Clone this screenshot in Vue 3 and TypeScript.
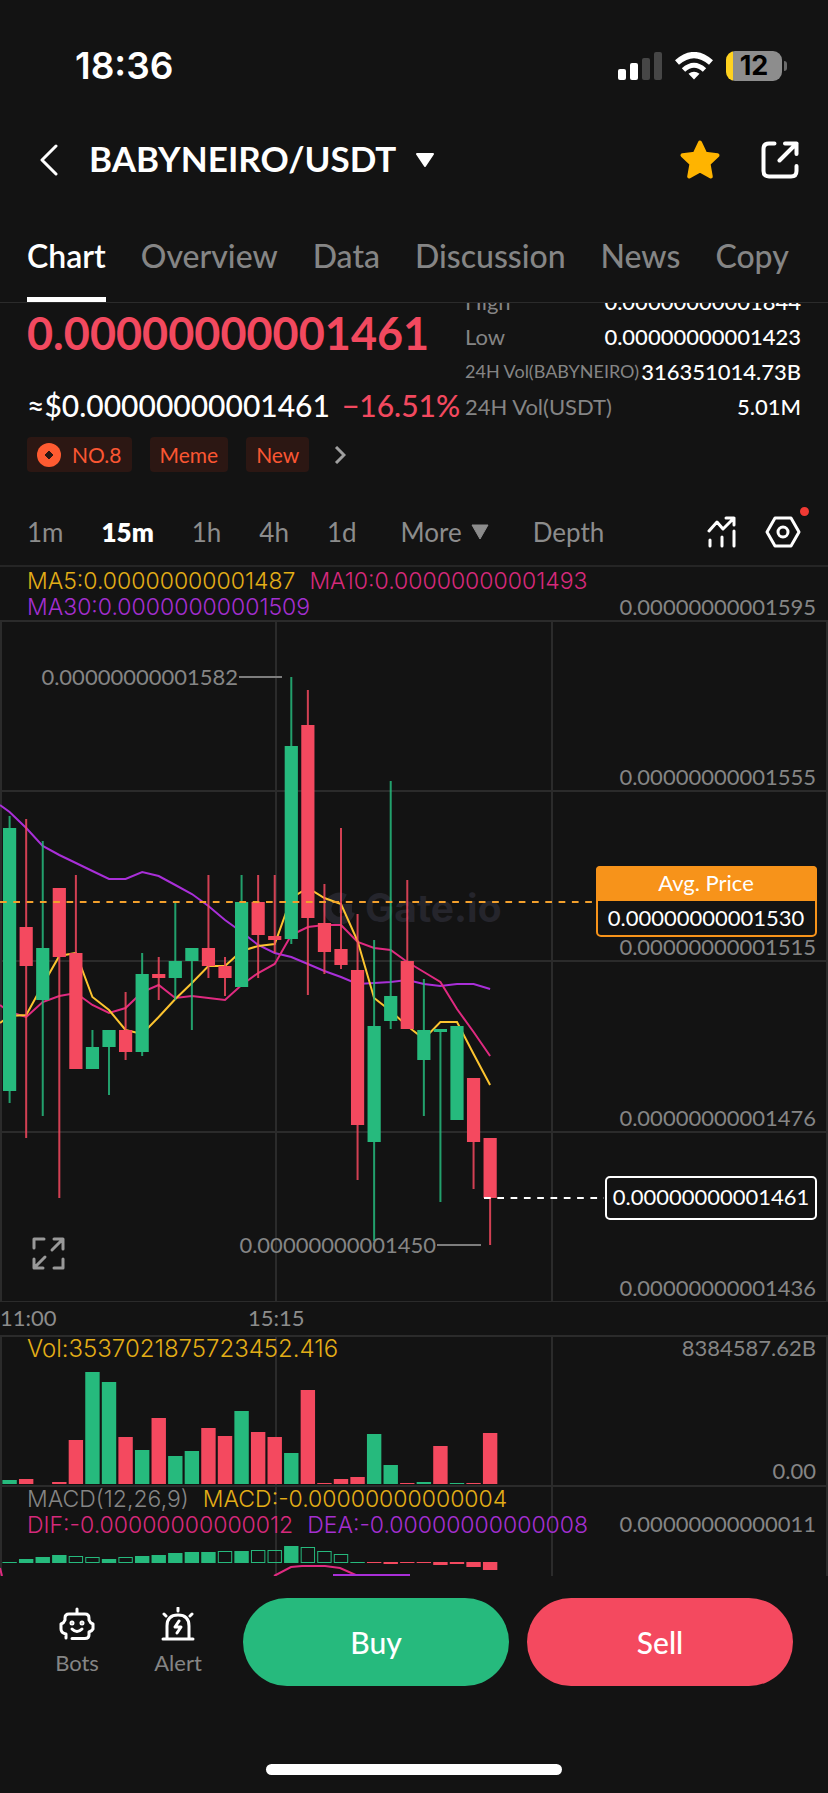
<script setup lang="ts">
type Side = 'up' | 'down'
interface Candle { side: Side; top: number; bottom: number; high: number; low: number }
interface MacdBar { height: number; hollow?: boolean }

const tabs = ['Chart', 'Overview', 'Data', 'Discussion', 'News', 'Copy']
const intervals = ['1m', '15m', '1h', '4h', '1d']
const stats = [
  { label: 'High', value: '0.00000000001844' },
  { label: 'Low', value: '0.00000000001423' },
  { label: '24H Vol(BABYNEIRO)', value: '316351014.73B', compact: true },
  { label: '24H Vol(USDT)', value: '5.01M' },
]

const FIRST_X = 9.6
const STEP = 16.57
const cx = (i: number) => FIRST_X + STEP * i

const c = (side: Side, top: number, bottom: number, high: number, low: number): Candle => ({ side, top, bottom, high, low })
const candles: Candle[] = [
  c('up', 207, 470, 195, 482), c('down', 306, 345, 198, 517), c('up', 327, 379, 220, 495),
  c('down', 267, 336, 267, 577), c('down', 332, 448, 254, 448), c('up', 426, 448, 409, 448),
  c('up', 409, 426, 409, 474), c('down', 409, 431, 371, 439), c('up', 353, 431, 332, 435),
  c('down', 353, 357, 336, 379), c('up', 340, 357, 282, 379), c('up', 327, 340, 327, 409),
  c('down', 327, 345, 254, 357), c('down', 345, 357, 336, 375), c('up', 281, 366, 254, 366),
  c('down', 281, 314, 254, 357), c('down', 315, 319, 254, 332), c('up', 125, 318, 56, 323),
  c('down', 104, 297, 69, 374), c('down', 302, 331, 263, 353), c('down', 328, 344, 207, 348),
  c('down', 349, 504, 293, 559), c('up', 405, 521, 319, 620), c('up', 375, 400, 160, 408),
  c('down', 340, 408, 259, 408), c('up', 409, 439, 358, 495), c('up', 408, 411, 408, 581),
  c('up', 405, 499, 405, 499), c('down', 457, 521, 457, 568), c('down', 517, 577, 517, 624),
]

const line = (start: number, ys: number[]) => `0,${start} ` + ys.map((y, i) => `${cx(i).toFixed(1)},${y}`).join(' ')
const ma5 = line(402, [395, 394, 364, 335, 332, 376, 389, 409, 413, 396, 378, 362, 345, 345, 330, 325, 323, 277, 267, 277, 283, 320, 377, 390, 405, 418, 401, 401, 433, 464])
const ma10 = line(384, [391, 396, 381, 375, 372, 384, 392, 387, 371, 364, 377, 375, 377, 379, 364, 352, 343, 314, 306, 304, 304, 321, 327, 329, 341, 351, 361, 388, 411, 435])
const ma30 = line(184, [191, 207, 225, 234, 242, 250, 258, 258, 251, 255, 264, 273, 285, 299, 311, 324, 332, 336, 343, 350, 356, 363, 362, 361, 359, 363, 365, 363, 363, 368])

const volumes = [4, 5, 0, 2, 44, 112, 102, 47, 34, 66, 28, 33, 56, 48, 73, 52, 47, 31, 94, 1, 5, 7, 50, 19, 1, 2, 38, 1, 1, 51]
const volumeSide = (i: number): Side => (i === 26 ? 'down' : candles[i].side)

const m = (height: number, hollow = false): MacdBar => ({ height, hollow })
const macd: MacdBar[] = [
  m(1), m(4), m(6), m(8), m(6, true), m(5, true), m(4), m(5, true), m(7), m(8), m(10), m(11), m(11), m(11, true), m(12),
  m(12, true), m(12, true), m(17), m(15, true), m(11, true), m(8, true), m(1), m(-1), m(-2), m(-1), m(-1), m(-3), m(-2), m(-5), m(-8),
]

const priceScale = [
  { y: 0, label: '0.00000000001595' }, { y: 170, label: '0.00000000001555' }, { y: 340, label: '0.00000000001515' },
  { y: 511, label: '0.00000000001476' }, { y: 681, label: '0.00000000001436' },
]
</script>

<template>
  <div class="app">
    <div class="status">
      <span class="clock">18:36</span>
      <div class="status-icons">
        <svg width="44" height="28" viewBox="0 0 44 28">
          <rect x="0" y="17" width="8" height="11" rx="2" fill="#fff" />
          <rect x="12" y="11" width="8" height="17" rx="2" fill="#fff" />
          <rect x="24" y="6" width="8" height="22" rx="2" fill="#464646" />
          <rect x="36" y="0" width="8" height="28" rx="2" fill="#464646" />
        </svg>
        <svg width="38" height="28" viewBox="0 0 38 28" fill="none" stroke="#fff" stroke-width="6">
          <path d="M2 10.500Q19 -4.500 36 10.500" />
          <path d="M8.500 18Q19 8.500 29.500 18" stroke-width="5" />
          <path d="M19 27.500L13.500 21.800Q19 17.500 24.500 21.800Z" fill="#fff" stroke="none" />
        </svg>
        <div class="battery"><span class="cell">12</span><span class="cap"></span></div>
      </div>
    </div>

    <header class="header">
      <button class="icon-btn" aria-label="Back">
        <svg width="18" height="32" viewBox="0 0 18 32" fill="none" stroke="#fff" stroke-width="3" stroke-linecap="round" stroke-linejoin="round"><path d="M16 2L2 16L16 30" /></svg>
      </button>
      <button class="pair">
        <h1>BABYNEIRO/USDT</h1>
        <svg width="18" height="14" viewBox="0 0 18 14"><path d="M1 1H17L9 13Z" fill="#fff" stroke="#fff" stroke-linejoin="round" stroke-width="2" /></svg>
      </button>
      <button class="icon-btn" aria-label="Favorite">
        <svg width="42" height="42" viewBox="0 0 42 42"><path d="M21 3.500L26.200 14.700L38.500 16.200L29.500 24.700L31.800 37.500L21 31.500L10.200 37.500L12.500 24.700L3.500 16.200L15.800 14.700Z" fill="#ffb400" stroke="#ffb400" stroke-width="4" stroke-linejoin="round" /></svg>
      </button>
      <button class="icon-btn" aria-label="Share">
        <svg width="38" height="38" viewBox="0 0 38 38" fill="none" stroke="#fff" stroke-width="4" stroke-linecap="round" stroke-linejoin="round">
          <path d="M13.500 2.500H8Q2.500 2.500 2.500 8V30Q2.500 35.500 8 35.500H30Q35.500 35.500 35.500 30V25" />
          <path d="M24 2.500H35.500V13M35.500 2.500L18.500 19.500" />
        </svg>
      </button>
    </header>

    <nav class="tabs">
      <a v-for="(t, i) in tabs" :key="t" href="#" :class="{ active: i === 0 }">{{ t }}</a>
    </nav>

    <section class="ticker">
      <div class="quote">
        <div class="price">0.00000000001461</div>
        <div class="fiat"><span>≈$0.00000000001461</span><span class="change">−16.51%</span></div>
        <div class="tags">
          <a href="#" class="tag">
            <svg width="24" height="24" viewBox="0 0 24 24"><circle cx="12" cy="12" r="12" fill="#ff5b31" /><path d="M12 8L16 12L12 16L8 12Z" fill="#2c1713" stroke="#2c1713" stroke-linejoin="round" /></svg>
            NO.8
          </a>
          <a href="#" class="tag">Meme</a>
          <a href="#" class="tag">New</a>
          <button class="icon-btn more-tags" aria-label="More tags">
            <svg width="12" height="18" viewBox="0 0 12 18" fill="none" stroke="#a0a0a0" stroke-width="3"><path d="M2 1L10 9L2 17" /></svg>
          </button>
        </div>
      </div>
      <dl class="stats">
        <div v-for="s in stats" :key="s.label" class="stat">
          <dt :class="{ compact: s.compact }">{{ s.label }}</dt>
          <dd>{{ s.value }}</dd>
        </div>
      </dl>
    </section>

    <div class="intervals">
      <button v-for="t in intervals" :key="t" :class="{ active: t === '15m' }">{{ t }}</button>
      <button class="more">More <svg width="18" height="16" viewBox="0 0 18 16"><path d="M1 1H17L9 15Z" fill="#8c8c8c" stroke="#8c8c8c" stroke-linejoin="round" /></svg></button>
      <button>Depth</button>
      <div class="tools">
        <button class="icon-btn" aria-label="Indicators">
          <svg width="30" height="32" viewBox="0 0 30 32" fill="none" stroke="#fff" stroke-width="3" stroke-linecap="round" stroke-linejoin="round">
            <path d="M2 15L10 6L16 13L27 2M19 2H27V9M3 24V30M15 21V30M27 15V30" />
          </svg>
        </button>
        <button class="icon-btn settings" aria-label="Chart settings">
          <svg width="36" height="34" viewBox="0 0 36 34" fill="none" stroke="#fff" stroke-width="3" stroke-linejoin="round">
            <path d="M10 3H26L34 17L26 31H10L2 17Z" /><circle cx="18" cy="17" r="5" />
          </svg>
          <span class="dot"></span>
        </button>
      </div>
    </div>

    <main class="chart">
      <div class="pane price-pane">
        <div class="legend">
          <div><span class="gold">MA5:0.00000000001487</span><span class="rose">MA10:0.00000000001493</span></div>
          <div><span class="violet">MA30:0.00000000001509</span></div>
        </div>
        <svg class="plot" viewBox="0 0 828 735">
          <g transform="translate(0 54)">
            <g class="grid">
              <path v-for="p in priceScale" :key="p.y" :d="`M0 ${p.y}H828`" />
              <path d="M1 0V681M276 0V681M552 0V681M827 0V681" />
            </g>
            <g class="mark">
              <path d="M345 277A12 12 0 1 0 351 291" fill="none" stroke="#25252c" stroke-width="8" />
              <rect x="339" y="283" width="13" height="9" fill="#25252c" />
              <text x="365" y="301">Gate.io</text>
            </g>
            <polyline :points="ma30" class="ma violet-line" />
            <polyline :points="ma10" class="ma rose-line" />
            <polyline :points="ma5" class="ma gold-line" />
            <g v-for="(k, i) in candles" :key="i" :class="k.side">
              <rect :x="cx(i) - 1" :y="k.high" width="2" :height="k.low - k.high" opacity=".85" />
              <rect :x="cx(i) - 6.6" :y="k.top" width="13.2" :height="k.bottom - k.top" />
            </g>
            <path d="M0 281H596" stroke="#f3a02c" stroke-width="2" stroke-dasharray="6.700 6.600" />
            <path d="M484 577H604" stroke="#fff" stroke-width="2" stroke-dasharray="6.700 6.600" />
            <g class="axis">
              <text v-for="p in priceScale" :key="p.y" x="816" :y="p.y - 6" text-anchor="end">{{ p.label }}</text>
              <text x="238" y="64" text-anchor="end">0.00000000001582</text>
              <text x="436" y="632" text-anchor="end">0.00000000001450</text>
              <path d="M239 56H282M437 624H481" stroke="#7d7d7d" stroke-width="2" />
            </g>
            <rect x="597" y="246" width="219" height="69" rx="4" fill="#131313" stroke="#f7931a" stroke-width="2" />
            <path d="M596 280V249Q596 245 600 245H813Q817 245 817 249V280Z" fill="#f7931a" />
            <text class="flag" x="706" y="270">Avg. Price</text>
            <text class="flag" x="706" y="305">0.00000000001530</text>
            <rect x="606" y="556" width="210" height="42" rx="4" fill="#131313" stroke="#fff" stroke-width="2" />
            <text class="flag" x="711" y="584">0.00000000001461</text>
            <g fill="none" stroke="#999" stroke-width="3" stroke-linecap="round" stroke-linejoin="round">
              <path d="M34 627V618H44M54 618H63V628M62 619L52 629M63 638V647H54M43 647H34V638M35 646L45 636" />
            </g>
          </g>
        </svg>
      </div>

      <div class="times"><span>11:00</span><span>15:15</span></div>

      <div class="pane">
        <div class="legend volume-legend"><span class="gold">Vol:3537021875723452.416</span></div>
        <svg class="plot" viewBox="0 0 828 150">
          <path class="grid" d="M0 1H828M1 0V150M276 0V150M552 0V150M827 0V150" />
          <rect v-for="(v, i) in volumes" :key="i" :class="volumeSide(i)" :x="cx(i) - 7.2" :y="149 - v" width="14.4" :height="v" />
          <g class="axis"><text x="816" y="21" text-anchor="end">8384587.62B</text><text x="816" y="144" text-anchor="end">0.00</text></g>
        </svg>
      </div>

      <div class="pane">
        <div class="legend">
          <div><span class="grey">MACD(12,26,9)</span><span class="gold">MACD:-0.00000000000004</span></div>
          <div><span class="rose">DIF:-0.00000000000012</span><span class="violet">DEA:-0.00000000000008</span></div>
        </div>
        <svg class="plot" viewBox="0 0 828 91">
          <path class="grid" d="M0 1H828M1 0V91M276 0V91M552 0V91M827 0V91" />
          <template v-for="(b, i) in macd" :key="i">
            <rect v-if="b.hollow" :x="cx(i) - 6.7" :y="77.500 - b.height" width="13.4" :height="b.height" fill="none" stroke="#26ba7d" />
            <rect v-else :class="b.height > 0 ? 'up' : 'down'" :x="cx(i) - 7.2" :y="b.height > 0 ? 78 - b.height : 77" width="14.4" :height="Math.abs(b.height)" />
          </template>
          <path d="M0 83L2 91M274 91L291 82L302 81L325 81L340 83L358 91" class="ma rose-line" />
          <path d="M333 90H410" class="ma violet-line" />
          <g class="axis"><text x="816" y="47" text-anchor="end">0.00000000000011</text></g>
        </svg>
      </div>
    </main>

    <footer class="bottom">
      <div class="actions">
        <button class="shortcut">
          <svg width="36" height="34" viewBox="0 0 36 34" fill="none" stroke="#fff" stroke-width="3" stroke-linecap="round" stroke-linejoin="round">
            <path d="M18 2V7M7 31V27Q2 26 2 22V17Q5 16 6 13V11Q6 7 10 7H26Q30 7 30 11V13Q31 16 34 17V22Q33 24 30 25V28Q30 31.500 26 31.500H13M13 22Q18 27 23 22" />
            <circle cx="13" cy="16" r="1" /><circle cx="23" cy="16" r="1" />
          </svg>
          Bots
        </button>
        <button class="shortcut">
          <svg width="36" height="34" viewBox="0 0 36 34" fill="none" stroke="#fff" stroke-width="3" stroke-linecap="round" stroke-linejoin="round">
            <path d="M3 32H33M7 32V19Q7 8 18 8Q29 8 29 19V32M18 1V4M4 7L6 9M32 7L30 9M19 14L15 20H21L17 26" />
          </svg>
          Alert
        </button>
        <button class="trade buy">Buy</button>
        <button class="trade sell">Sell</button>
      </div>
      <div class="home"></div>
    </footer>
  </div>
</template>

<style>
body { background: #131313; }
</style>

<style scoped>
* { box-sizing: border-box; }
.app { display: flex; flex-direction: column; min-height: 100vh; background: #131313; color: #fff; font-family: Lato, "Noto Sans", sans-serif; overflow: hidden; }
button { border: 0; padding: 0; background: none; color: inherit; font: inherit; }
a { color: inherit; text-decoration: none; }
svg { display: block; flex: none; }
.icon-btn { display: flex; align-items: center; justify-content: center; }

.status { display: flex; justify-content: space-between; align-items: center; padding: 36px 41px 0 75px; height: 96px; }
.clock { font: 600 37px/60px Inter, sans-serif; }
.status-icons { display: flex; align-items: center; gap: 13px; }
.battery { display: flex; align-items: center; gap: 2px; }
.cell { width: 56px; border-radius: 9px; background: linear-gradient(90deg, #ffd21f 7px, #8d8d8d 7px); color: #000; font: 700 27px/30px Inter, sans-serif; text-align: center; }
.cap { width: 3px; height: 10px; border-radius: 0 3px 3px 0; background: #6a6a6a; }

.header { display: flex; align-items: center; height: 127px; padding: 0 29px 0 40px; }
.pair { display: flex; align-items: center; gap: 20px; margin: 0 auto 0 31px; }
h1 { margin: 0; padding-bottom: 4px; font-size: 35px; line-height: 48px; font-weight: 700; }
.header .icon-btn + .icon-btn { margin-left: 40px; }

.tabs { display: flex; gap: 35px; height: 80px; padding: 0 27px; border-bottom: 1px solid #2b2b2b; font-size: 32px; line-height: 65px; font-weight: 500; color: #858585; white-space: nowrap; }
.tabs .active { color: #fff; font-weight: 600; border-bottom: 5px solid #fff; }

.ticker { display: flex; height: 187px; padding: 0 27px; overflow: hidden; }
.quote { flex: none; width: 438px; white-space: nowrap; }
.price { color: #f2495f; font-size: 45px; line-height: 60px; font-weight: 700; }
.fiat { display: flex; gap: 12px; margin-top: 18px; font-size: 30px; line-height: 48px; font-weight: 500; }
.change { color: #f2495f; }
.tags { display: flex; align-items: center; gap: 18px; margin-top: 8px; color: #fa5632; font-size: 21px; line-height: 35px; }
.tag { display: flex; align-items: center; gap: 11px; padding: 0 10px; border-radius: 4px; background: #2c1713; }
.more-tags { margin-left: 7px; }
.stats { flex: 1; margin: -19px 0 0; font-size: 22px; line-height: 35px; white-space: nowrap; }
.stat { display: flex; justify-content: space-between; }
dt { color: #858585; }
.compact { font-size: 18px; }
dd { margin: 0; font-weight: 500; }

.intervals { display: flex; align-items: center; gap: 38px; height: 75px; padding: 8px 27px 0; color: #8c8c8c; font-size: 26px; line-height: 40px; }
.intervals .active { color: #fff; font-weight: 800; }
.more { display: flex; align-items: center; gap: 9px; margin: 0 6px; }
.tools { display: flex; align-items: center; gap: 28px; margin-left: auto; }
.settings { position: relative; }
.dot { position: absolute; top: -8px; right: -8px; width: 9px; height: 9px; border-radius: 50%; background: #f03a34; }

.pane { position: relative; }
.price-pane { border-top: 2px solid #252525; margin-bottom: -1px; }
.legend { position: absolute; top: 1px; left: 27px; color: #999; font: 300 23px/26px Inter, sans-serif; white-space: nowrap; }
.legend div { display: flex; gap: 14px; }
.volume-legend { font-size: 24px; }
.plot { width: 100%; height: auto; }
.grid { fill: none; stroke: #2b2b2b; stroke-width: 2; }
.axis text { fill: #858585; font-size: 22px; }
.flag { fill: #fff; font-size: 22px; text-anchor: middle; }
.mark text { fill: #25252c; font: 700 39px Inter, sans-serif; }
.up { fill: #26ba7d; }
.down { fill: #f4495f; }
.ma { fill: none; stroke-width: 2; }
.gold { color: #e3ae17; } .gold-line { stroke: #fcc430; }
.rose { color: #d6297b; } .rose-line { stroke: #e02a80; }
.violet { color: #a42fd0; } .violet-line { stroke: #a92fd8; }
.grey { color: #858585; }
.times { display: grid; grid-template-columns: 248px 1fr; height: 34px; color: #8c8c8c; font-size: 22px; line-height: 34px; }

.bottom { display: flex; flex-direction: column; flex: 1; background: #131313; }
.actions { display: flex; align-items: center; gap: 18px; padding: 22px 35px 0 27px; }
.shortcut { display: flex; flex-direction: column; align-items: center; gap: 8px; width: 100px; color: #858585; font-size: 22px; line-height: 28px; }
.shortcut + .shortcut { margin-left: -17px; margin-right: -3px; }
.trade { flex: 1; height: 88px; border-radius: 44px; font-size: 30px; font-weight: 500; }
.buy { background: #26ba7d; }
.sell { background: #f4495f; }
.home { width: 296px; height: 11px; margin: auto auto 18px; border-radius: 6px; background: #fff; }
</style>
